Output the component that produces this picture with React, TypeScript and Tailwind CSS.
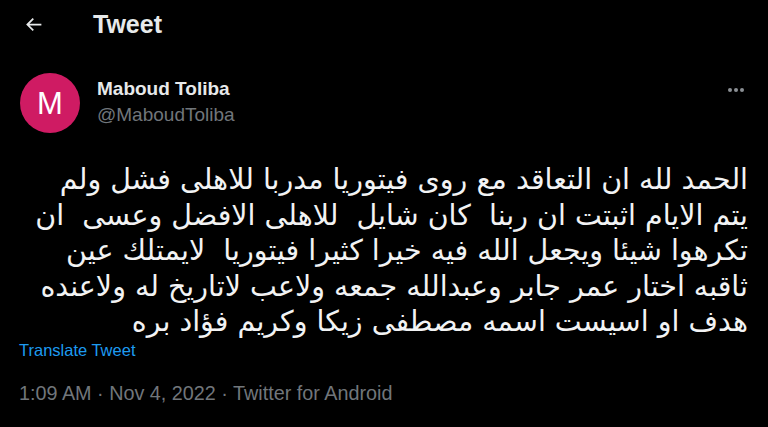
import React from 'react';

const lines = [
  'الحمد لله ان التعاقد مع روى فيتوريا مدربا للاهلى فشل ولم',
  'يتم الايام اثبتت ان ربنا  كان شايل  للاهلى الافضل وعسى  ان',
  'تكرهوا شيئا ويجعل الله فيه خيرا كثيرا فيتوريا  لايمتلك عين',
  'ثاقبه اختار عمر جابر وعبدالله جمعه ولاعب لاتاريخ له ولاعنده',
  'هدف او اسيست اسمه مصطفى زيكا وكريم فؤاد بره',
];

const App: React.FC = () => {
  return (
    <div className="w-[768px] h-[427px] bg-black text-[#e7e9ea] overflow-hidden font-['Liberation_Sans',Arial,sans-serif]">
      {/* Header */}
      <div className="flex items-center h-[48px] pl-[23px]">
        <svg viewBox="0 0 24 24" className="w-[21px] h-[21px]" fill="#e7e9ea">
          <path d="M7.414 13l5.043 5.04-1.414 1.42L3.586 12l7.457-7.46 1.414 1.42L7.414 11H21v2H7.414z" />
        </svg>
        <span className="ml-[49px] text-[25px] font-bold leading-none">Tweet</span>
      </div>

      {/* Author row */}
      <div className="flex items-start pl-[20px] pr-[22px] pt-[25px]">
        <div className="w-[60px] h-[60px] rounded-full bg-[#cf1b63] flex items-center justify-center text-white text-[31px] leading-none">
          M
        </div>
        <div className="ml-[17px] pt-[4px]">
          <div className="text-[19px] font-bold leading-[24px]">Maboud Toliba</div>
          <div className="text-[19px] text-[#71767b] leading-[24px] mt-[2px]">@MaboudToliba</div>
        </div>
        <div className="ml-auto pt-[15px] flex gap-[2px] mr-[2px]">
          <span className="w-[4px] h-[4px] rounded-full bg-[#8b8f94]" />
          <span className="w-[4px] h-[4px] rounded-full bg-[#8b8f94]" />
          <span className="w-[4px] h-[4px] rounded-full bg-[#8b8f94]" />
        </div>
      </div>

      {/* Tweet body */}
      <div dir="rtl" className="pr-[20px] pl-[20px] mt-[29px] text-right text-[28.5px] leading-[35.5px] font-['DejaVu_Sans',sans-serif] text-[#f2f3f4]">
        {lines.map((l, i) => (
          <div key={i} className="whitespace-pre">{l}</div>
        ))}
      </div>

      <div className="pl-[19px] mt-0 text-[16.5px] text-[#1d9bf0] leading-[20px]">Translate Tweet</div>

      <div className="pl-[19px] mt-[21px] text-[19.8px] text-[#71767b] leading-[24px]">
        1:09 AM · Nov 4, 2022 · Twitter for Android
      </div>
    </div>
  );
};

export default App;
